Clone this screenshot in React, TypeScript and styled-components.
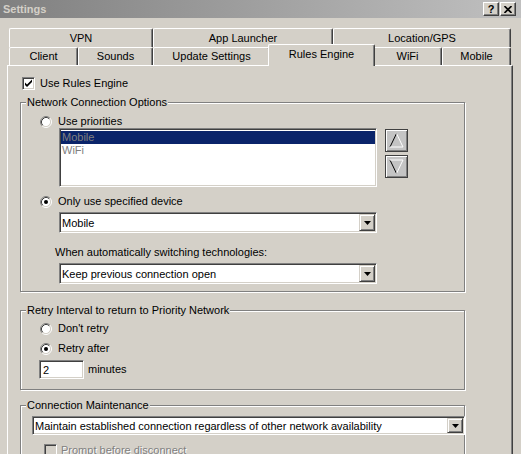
import React from 'react'
import styled, { createGlobalStyle, css } from 'styled-components'

const GlobalStyle = createGlobalStyle`
  html, body {
    margin: 0;
    padding: 0;
    background: #d4d0c8;
  }
  body {
    font-family: "Liberation Sans", Arial, sans-serif;
    font-size: 11px;
    color: #000;
  }
`

const sunken = css`
  box-sizing: border-box;
  border: 1px solid;
  border-color: #808080 #fff #fff #808080;
  box-shadow: inset 1px 1px #404040, inset -1px -1px #d4d0c8;
`

const raised = css`
  box-sizing: border-box;
  border: 1px solid;
  border-color: #d4d0c8 #404040 #404040 #d4d0c8;
  box-shadow: inset 1px 1px #fff, inset -1px -1px #808080;
  background: #d4d0c8;
`

const Window = styled.div`
  width: 521px;
  height: 454px;
  overflow: hidden;
  background: #d4d0c8;
  display: flex;
  flex-direction: column;
`

const TitleBar = styled.div`
  height: 18px;
  flex: none;
  display: flex;
  align-items: center;
  padding: 0 5px 0 3px;
  background: linear-gradient(to right, #808080, #c0c0c0);
`

const Title = styled.span`
  flex: 1;
  font-weight: bold;
  color: #d4d0c8;
  line-height: 13px;
`

const CaptionButton = styled.span<{ $gap?: number }>`
  ${raised};
  border-color: #fff #404040 #404040 #fff;
  box-shadow: inset -1px -1px #808080;
  width: 16px;
  height: 14px;
  margin-left: ${(p) => p.$gap ?? 0}px;
  display: flex;
  align-items: center;
  justify-content: center;
  font-weight: bold;
  font-size: 11px;
  line-height: 12px;
`

const TabStrip = styled.div`
  flex: none;
  padding: 10px 0 0 9px;
  display: flex;
  flex-direction: column;
`

const TabRow = styled.div<{ $h: number }>`
  display: flex;
  align-items: flex-end;
  height: ${(p) => p.$h}px;
`

const Tab = styled.div<{ $w: number; $active?: boolean }>`
  box-sizing: border-box;
  width: ${(p) => p.$w}px;
  height: 100%;
  flex: none;
  background: #d4d0c8;
  border-top: 1px solid #fff;
  border-left: 1px solid #fff;
  border-right: 1px solid #404040;
  box-shadow: inset -1px 0 #808080;
  border-radius: 2px 2px 0 0;
  display: flex;
  align-items: center;
  justify-content: center;
  line-height: 13px;
  white-space: nowrap;

  ${(p) =>
    p.$active &&
    css`
      width: ${p.$w + 4}px;
      height: 22px;
      margin: 0 -2px -1px;
      padding-bottom: 3px;
      position: relative;
      z-index: 1;
    `}
`

const Panel = styled.div`
  flex: 1;
  box-sizing: border-box;
  width: 506px;
  margin-left: 7px;
  border-top: 1px solid #fff;
  border-left: 1px solid #fff;
  border-right: 1px solid #404040;
  box-shadow: inset -1px 0 #808080;
  display: flex;
  flex-direction: column;
  align-items: flex-start;
`

const Group = styled.div<{ $mt: number; $h: number; $pt: number }>`
  position: relative;
  box-sizing: border-box;
  width: 445px;
  height: ${(p) => p.$h}px;
  flex: none;
  margin: ${(p) => p.$mt}px 0 0 12px;
  padding: ${(p) => p.$pt}px 0 0 19px;
  border: 1px solid #808080;
  box-shadow: 1px 1px 0 #fff, inset 1px 1px 0 #fff;
  display: flex;
  flex-direction: column;
  align-items: flex-start;
`

const GroupCaption = styled.span`
  position: absolute;
  top: -7px;
  left: 5px;
  padding: 0 1px;
  background: #d4d0c8;
  line-height: 13px;
  white-space: nowrap;
`

const OptionRow = styled.label<{ $mt?: number; $ml?: number; $gap: number; $disabled?: boolean }>`
  display: flex;
  align-items: center;
  gap: ${(p) => p.$gap}px;
  height: 13px;
  margin: ${(p) => p.$mt ?? 0}px 0 0 ${(p) => p.$ml ?? 0}px;
  line-height: 13px;
  white-space: nowrap;
  color: ${(p) => (p.$disabled ? '#808080' : '#000')};
  text-shadow: ${(p) => (p.$disabled ? '1px 1px 0 #fff' : 'none')};
`

const CheckBox = styled.span<{ $disabled?: boolean }>`
  ${sunken};
  width: 13px;
  height: 13px;
  flex: none;
  background: ${(p) => (p.$disabled ? '#d4d0c8' : '#fff')};
  display: flex;
  align-items: center;
  justify-content: center;
`

const RadioDot = styled.svg`
  flex: none;
  display: block;
`

const Row = styled.div<{ $mt?: number; $ml?: number; $gap?: number; $align?: string }>`
  display: flex;
  align-items: ${(p) => p.$align ?? 'flex-start'};
  gap: ${(p) => p.$gap ?? 0}px;
  margin: ${(p) => p.$mt ?? 0}px 0 0 ${(p) => p.$ml ?? 0}px;
`

const ListBox = styled.div`
  ${sunken};
  width: 318px;
  height: 59px;
  background: #fff;
  padding: 2px 1px;
  display: flex;
  flex-direction: column;
`

const ListItem = styled.div<{ $selected?: boolean }>`
  height: 13px;
  line-height: 13px;
  padding-left: 1px;
  color: #808080;
  background: ${(p) => (p.$selected ? '#0a246a' : 'transparent')};
`

const ArrowColumn = styled.div`
  display: flex;
  flex-direction: column;
  gap: 3px;
  margin-top: 1px;
`

const ArrowButton = styled.span`
  box-sizing: border-box;
  width: 23px;
  height: 23px;
  background: #c4c4c4;
  border: 1px solid #404040;
  box-shadow: inset 1px 1px #fff, inset -1px -1px #808080;
  display: flex;
  align-items: center;
  justify-content: center;
`

const Combo = styled.div<{ $w: number; $h: number; $mt?: number; $ml?: number }>`
  ${sunken};
  width: ${(p) => p.$w}px;
  height: ${(p) => p.$h}px;
  margin: ${(p) => p.$mt ?? 0}px 0 0 ${(p) => p.$ml ?? 0}px;
  background: #fff;
  padding: 1px;
  display: flex;
  align-items: stretch;
  flex: none;
`

const ComboText = styled.span`
  flex: 1;
  display: flex;
  align-items: center;
  padding-left: 1px;
  white-space: nowrap;
  overflow: hidden;
`

const DropButton = styled.span`
  ${raised};
  width: 16px;
  flex: none;
  display: flex;
  align-items: center;
  justify-content: center;
`

const Label = styled.div<{ $mt?: number; $ml?: number }>`
  margin: ${(p) => p.$mt ?? 0}px 0 0 ${(p) => p.$ml ?? 0}px;
  line-height: 13px;
  white-space: nowrap;
`

const NumberField = styled.div`
  ${sunken};
  width: 45px;
  height: 19px;
  margin-left: -1px;
  background: #fff;
  padding-left: 3px;
  display: flex;
  align-items: center;
`

const Radio = ({ checked }: { checked?: boolean }) => (
  <RadioDot width="12" height="12" viewBox="0 0 12 12">
    <circle cx="6" cy="6" r="4.5" fill="#fff" />
    <path d="M2.11 9.89 A5.5 5.5 0 0 1 9.89 2.11" fill="none" stroke="#808080" />
    <path d="M9.89 2.11 A5.5 5.5 0 0 1 2.11 9.89" fill="none" stroke="#fff" />
    <path d="M2.82 9.18 A4.5 4.5 0 0 1 9.18 2.82" fill="none" stroke="#404040" />
    <path d="M9.18 2.82 A4.5 4.5 0 0 1 2.82 9.18" fill="none" stroke="#d4d0c8" />
    {checked && <circle cx="6" cy="6" r="2" fill="#000" />}
  </RadioDot>
)

const Check = () => (
  <svg width="9" height="9" viewBox="0 0 9 9">
    <path d="M1 3.5 L3 5.5 L8 0.5 L8 3 L3 8 L1 6 Z" fill="#000" />
  </svg>
)

const DownArrow = () => (
  <svg width="7" height="4" viewBox="0 0 7 4">
    <path d="M0 0 H7 L3.5 4 Z" fill="#000" />
  </svg>
)

const UpTriangle = () => (
  <svg width="15" height="15" viewBox="0 0 15 15">
    <path d="M7.5 0.5 L1 14" fill="none" stroke="#000" />
    <path d="M7.5 0.5 L14 14 L1 14" fill="none" stroke="#fff" />
  </svg>
)

const DownTriangle = () => (
  <svg width="15" height="15" viewBox="0 0 15 15">
    <path d="M1 1 L7.5 14.5" fill="none" stroke="#000" />
    <path d="M1 1 L14 1 L7.5 14.5" fill="none" stroke="#fff" />
  </svg>
)

const CloseGlyph = () => (
  <svg width="8" height="7" viewBox="0 0 8 7">
    <path d="M0.5 0 L7.5 7 M7.5 0 L0.5 7" stroke="#000" strokeWidth="1.6" />
  </svg>
)

const topTabs = [
  { label: 'VPN', w: 144 },
  { label: 'App Launcher', w: 180 },
  { label: 'Location/GPS', w: 178 }
]

const bottomTabs = [
  { label: 'Client', w: 69 },
  { label: 'Sounds', w: 75 },
  { label: 'Update Settings', w: 117 },
  { label: 'Rules Engine', w: 103, active: true },
  { label: 'WiFi', w: 69 },
  { label: 'Mobile', w: 69 }
]

export default function App() {
  return (
    <>
      <GlobalStyle />
      <Window>
        <TitleBar>
          <Title>Settings</Title>
          <CaptionButton>?</CaptionButton>
          <CaptionButton $gap={1}>
            <CloseGlyph />
          </CaptionButton>
        </TitleBar>

        <TabStrip>
          <TabRow $h={19}>
            {topTabs.map((t) => (
              <Tab key={t.label} $w={t.w}>
                {t.label}
              </Tab>
            ))}
          </TabRow>
          <TabRow $h={18}>
            {bottomTabs.map((t) => (
              <Tab key={t.label} $w={t.w} $active={t.active}>
                {t.label}
              </Tab>
            ))}
          </TabRow>
        </TabStrip>

        <Panel>
          <OptionRow $mt={11} $ml={14} $gap={5}>
            <CheckBox>
              <Check />
            </CheckBox>
            Use Rules Engine
          </OptionRow>

          <Group $mt={12} $h={190} $pt={12}>
            <GroupCaption>Network Connection Options</GroupCaption>
            <OptionRow $gap={6}>
              <Radio />
              Use priorities
            </OptionRow>
            <Row $ml={19} $gap={8}>
              <ListBox>
                <ListItem $selected>Mobile</ListItem>
                <ListItem>WiFi</ListItem>
              </ListBox>
              <ArrowColumn>
                <ArrowButton>
                  <UpTriangle />
                </ArrowButton>
                <ArrowButton>
                  <DownTriangle />
                </ArrowButton>
              </ArrowColumn>
            </Row>
            <OptionRow $mt={8} $gap={6}>
              <Radio checked />
              Only use specified device
            </OptionRow>
            <Combo $w={318} $h={21} $mt={4} $ml={19}>
              <ComboText>Mobile</ComboText>
              <DropButton>
                <DownArrow />
              </DropButton>
            </Combo>
            <Label $mt={13} $ml={15}>
              When automatically switching technologies:
            </Label>
            <Combo $w={318} $h={21} $mt={4} $ml={19}>
              <ComboText>Keep previous connection open</ComboText>
              <DropButton>
                <DownArrow />
              </DropButton>
            </Combo>
          </Group>

          <Group $mt={18} $h={80} $pt={11}>
            <GroupCaption>Retry Interval to return to Priority Network</GroupCaption>
            <OptionRow $gap={6}>
              <Radio />
              Don't retry
            </OptionRow>
            <OptionRow $mt={7} $gap={6}>
              <Radio checked />
              Retry after
            </OptionRow>
            <Row $mt={5} $gap={4} $align="center">
              <NumberField>2</NumberField>
              <Label>minutes</Label>
            </Row>
          </Group>

          <Group $mt={15} $h={70} $pt={10}>
            <GroupCaption>Connection Maintenance</GroupCaption>
            <Combo $w={433} $h={19} $ml={-8}>
              <ComboText>Maintain established connection regardless of other network availability</ComboText>
              <DropButton>
                <DownArrow />
              </DropButton>
            </Combo>
            <OptionRow $mt={9} $ml={4} $gap={4} $disabled>
              <CheckBox $disabled />
              Prompt before disconnect
            </OptionRow>
          </Group>
        </Panel>
      </Window>
    </>
  )
}
